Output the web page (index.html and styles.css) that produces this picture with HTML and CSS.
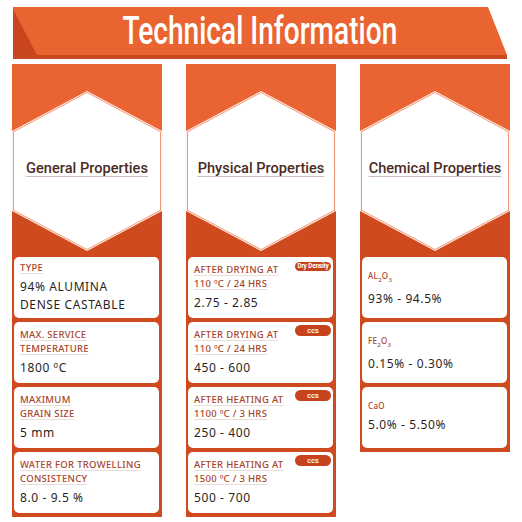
FILE: index.html
```html
<!DOCTYPE html>
<html lang="en">

<head>
    <meta charset="UTF-8">
    <meta name="viewport" content="width=device-width, initial-scale=1.0">
    <title>Technical Information</title>
    <link rel="stylesheet" href="styles.css">
</head>

<body>
    <div class="banner">
        <span class="banner-title">Technical Information</span>
    </div>

    <div class="cols">
        <div class="col">
            <div class="col-head">
                <div class="hex">
                    <div class="hex-mid">
                        <div class="hex-in">
                            <h2>General Properties</h2>
                        </div>
                    </div>
                </div>
            </div>
            <div class="cards">
                <div class="card first">
                    <div class="label">Type</div>
                    <div class="value">94% ALUMINA<br>DENSE CASTABLE</div>
                </div>
                <div class="card">
                    <div class="label">Max. Service<br>Temperature</div>
                    <div class="value">1800 ºC</div>
                </div>
                <div class="card">
                    <div class="label">Maximum<br>Grain Size</div>
                    <div class="value">5 mm</div>
                </div>
                <div class="card">
                    <div class="label">Water for Trowelling<br>Consistency</div>
                    <div class="value">8.0 - 9.5 %</div>
                </div>
            </div>
        </div>

        <div class="col">
            <div class="col-head">
                <div class="hex">
                    <div class="hex-mid">
                        <div class="hex-in">
                            <h2>Physical Properties</h2>
                        </div>
                    </div>
                </div>
            </div>
            <div class="cards">
                <div class="card">
                    <span class="badge small">Dry Density</span>
                    <div class="label">After Drying At<br>110 ºC / 24 HRS</div>
                    <div class="value">2.75 - 2.85</div>
                </div>
                <div class="card">
                    <span class="badge">CCS</span>
                    <div class="label">After Drying At<br>110 ºC / 24 HRS</div>
                    <div class="value">450 - 600</div>
                </div>
                <div class="card">
                    <span class="badge">CCS</span>
                    <div class="label">After Heating At<br>1100 ºC / 3 HRS</div>
                    <div class="value">250 - 400</div>
                </div>
                <div class="card">
                    <span class="badge">CCS</span>
                    <div class="label">After Heating At<br>1500 ºC / 3 HRS</div>
                    <div class="value">500 - 700</div>
                </div>
            </div>
        </div>

        <div class="col">
            <div class="col-head">
                <div class="hex">
                    <div class="hex-mid">
                        <div class="hex-in">
                            <h2>Chemical Properties</h2>
                        </div>
                    </div>
                </div>
            </div>
            <div class="cards chem">
                <div class="card">
                    <div class="label">AL<sub>2</sub>O<sub>3</sub></div>
                    <div class="value">93% - 94.5%</div>
                </div>
                <div class="card">
                    <div class="label">FE<sub>2</sub>O<sub>3</sub></div>
                    <div class="value">0.15% - 0.30%</div>
                </div>
                <div class="card">
                    <div class="label">CaO</div>
                    <div class="value">5.0% - 5.50%</div>
                </div>
            </div>
        </div>
    </div>
</body>

</html>
```

FILE: styles.css
```css
body {
    margin: 0;
    background: #fff;
    font-family: "Noto Sans", sans-serif;
}

.banner {
    position: relative;
    height: 52px;
    margin: 7px 15px 0 13px;
    display: flex;
    align-items: center;
    justify-content: center;
    padding-bottom: 4px;
    box-sizing: border-box;
    background: #ea6432;
    box-shadow: inset 0 -4px 0 #c8491f;
    clip-path: polygon(0 0, calc(100% - 19px) 0, 100% 48px, 100% 100%, 0 100%);

    &::before {
        content: "";
        position: absolute;
        left: 0;
        top: 2px;
        bottom: 4px;
        width: 24px;
        background: #c9461d;
        clip-path: polygon(0 0, 100% 100%, 0 100%);
    }

    .banner-title {
        font-family: Roboto, sans-serif;
        font-weight: 500;
        font-size: 39px;
        line-height: 1;
        color: #fff;
        transform: scaleX(0.72);
        white-space: nowrap;
    }
}

.cols {
    display: flex;
    gap: 24px;
    padding: 5px 12px 0;
    align-items: flex-start;
}

.col {
    width: 150px;
    background: #d04a1f;
    padding-bottom: 4px;
}

.col-head {
    height: 190px;
    padding-top: 27px;
    box-sizing: border-box;
    background: linear-gradient(#ea6332 0 55%, #d04a1f 55%);
}

.hex,
.hex-mid,
.hex-in {
    clip-path: polygon(50% 0, 100% 25%, 100% 75%, 50% 100%, 0 75%, 0 25%);
}

.hex {
    height: 160px;
    background: #fff3ee;
    padding: 1px;
    box-sizing: border-box;
}

.hex-mid {
    height: 100%;
    background: #f09a77;
    padding: 1px;
    box-sizing: border-box;
}

.hex-in {
    height: 100%;
    background: #fff;
    display: flex;
    align-items: center;
    justify-content: center;
    padding-bottom: 6px;
    box-sizing: border-box;

    & h2 {
        margin: 0;
        font-family: Roboto, sans-serif;
        font-size: 14.6px;
        font-weight: 500;
        color: #4a2c25;
        text-decoration: underline;
        text-decoration-color: #cdbdb6;
        text-underline-offset: 3px;
        white-space: nowrap;
    }
}

.cards {
    display: flex;
    flex-direction: column;
    gap: 4px;
    padding: 3px 3px 0 2px;
}

.card {
    position: relative;
    height: 61px;
    box-sizing: border-box;
    padding: 6px 6px 0 6px;
    background: #fff;
    border-radius: 5px;

    &.first {
        padding-top: 4px;
    }
}

.label {
    font-size: 9.5px;
    line-height: 14px;
    font-weight: 500;
    letter-spacing: 0.3px;
    text-transform: uppercase;
    color: #a8442c;
    text-decoration: underline;
    text-decoration-color: #ecdcd6;
    text-underline-offset: 2px;
}

.value {
    margin-top: 3px;
    font-size: 12px;
    line-height: 18px;
    letter-spacing: 0.6px;
    color: #2a1f1c;
}

.chem {
    .card {
        padding-top: 12px;
    }

    .label {
        font-size: 8px;
        text-transform: none;
        text-decoration: none;

        & sub {
            font-size: 6px;
        }
    }
}

.badge {
    position: absolute;
    top: 3px;
    right: 2px;
    width: 36px;
    height: 11px;
    border-radius: 6px;
    background: #c6431d;
    color: #fff;
    font-family: Roboto, sans-serif;
    font-size: 6px;
    font-weight: 700;
    line-height: 11px;
    text-align: center;
    white-space: nowrap;

    &.small {
        top: 5px;
        height: 9px;
        line-height: 9px;
        font-size: 6.4px;
        letter-spacing: -0.15px;
    }
}
```
